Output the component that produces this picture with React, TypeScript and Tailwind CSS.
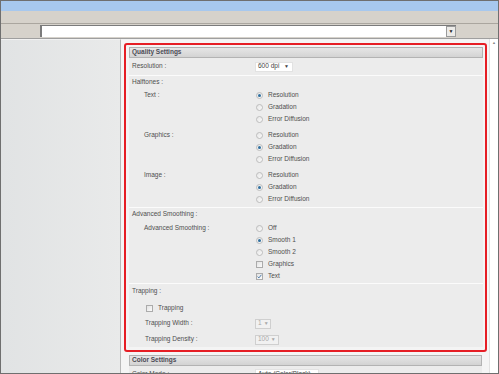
import React from 'react';

const font = { fontFamily: '"Liberation Sans", Arial, sans-serif' };

function Radio({ checked, label }: { checked?: boolean; label: string }) {
  return (
    <div className="flex items-center h-[12px]">
      <span className="ml-[1px] w-[7px] h-[7px] rounded-full border border-[#bdbdbd] bg-gradient-to-br from-[#e6e6e6] to-[#fafafa] flex items-center justify-center">
        {checked && <span className="w-[3px] h-[3px] rounded-full bg-[#2f6f9f]" />}
      </span>
      <span className="ml-[5px]">{label}</span>
    </div>
  );
}

function Checkbox({ checked, label }: { checked?: boolean; label: string }) {
  return (
    <div className="flex items-center h-[12px]">
      <span className="ml-[1px] w-[7px] h-[7px] border border-[#ababab] bg-gradient-to-br from-[#e2e2e2] to-[#fbfbfb] flex items-center justify-center">
        {checked && (
          <svg width="5" height="5" viewBox="0 0 5 5">
            <path d="M0.6 2.6 L1.9 3.9 L4.4 0.8" stroke="#3a6ea5" strokeWidth="0.9" fill="none" />
          </svg>
        )}
      </span>
      <span className="ml-[5px]">{label}</span>
    </div>
  );
}

function Select({ value, width, disabled }: { value: string; width: string; disabled?: boolean }) {
  return (
    <div
      className={`${width} h-[10px] flex items-center justify-between pl-[2px] pr-[3px] border whitespace-nowrap overflow-hidden ${
        disabled ? 'border-[#cfcfcf] bg-[#f1f1f1] text-[#a8a8a8]' : 'border-[#e2e2e2] bg-white text-[#444]'
      }`}
    >
      <span>{value}</span>
      <span className="text-[5px] ml-[2px]">▼</span>
    </div>
  );
}

function Header({ title }: { title: string }) {
  return (
    <div className="h-[11px] border border-[#b3b3b3] bg-gradient-to-b from-[#e6e6e6] to-[#d3d3d3] flex items-center pl-[2px] font-bold text-[#4b4b55]">
      {title}
    </div>
  );
}

function Sep() {
  return <div className="h-[1px] bg-[#fbfbfb]" />;
}

function RadioGroup({ label, items, sel }: { label: string; items: string[]; sel: number }) {
  return (
    <div className="flex">
      <div className="w-[126px] pl-[15px] h-[12px] flex items-center">{label}</div>
      <div>
        {items.map((it, i) => (
          <Radio key={it} label={it} checked={i === sel} />
        ))}
      </div>
    </div>
  );
}

export default function App() {
  const halftone = ['Resolution', 'Gradation', 'Error Diffusion'];
  return (
    <div
      className="w-[499px] h-[374px] border border-[#6f6f6f] flex flex-col overflow-hidden text-[6.5px] text-[#4e4e4e] leading-none bg-[#d6d2cb]"
      style={font}
    >
      <div className="h-[10px] bg-[#a7c8ee]" />
      <div className="h-[13px] bg-[#d6d2cb] border-b border-[#aaa69f]" />
      <div className="h-[15px] bg-[#d6d2cb] border-b border-[#9f9f9f] flex items-start pt-[1px]">
        <div className="ml-[39px] w-[416px] h-[12px] bg-white border-l-2 border-t border-[#7b7b7b] flex justify-end">
          <div className="w-[10px] h-[11px] border border-[#9a9a9a] bg-[#ecebe8] flex items-center justify-center text-[5px] text-[#222]">
            ▼
          </div>
        </div>
      </div>
      <div className="flex-1 flex min-h-0">
        <div className="w-[120px] bg-gradient-to-r from-[#e1e3e4] to-[#e9eaea] border-r border-[#b9b9b9] border-t border-t-[#f2f2f2]" />
        <div className="flex-1 bg-[#f5f5f5] pt-[3px] pl-[3px] pr-[2px] border-t border-[#f2f2f2]">
          <div className="border-2 border-[#e61e25] rounded-[3px] pt-[2px] pl-[3px] pr-[2px] pb-[2px] bg-[#f4f4f4]">
            <Header title="Quality Settings" />
            <div className="bg-[#ececec]">
              <div className="flex items-center h-[17px]">
                <div className="w-[126px] pl-[3px]">Resolution :</div>
                <Select value="600 dpi" width="w-[38px]" />
              </div>
              <Sep />
              <div className="h-[11px] flex items-center pl-[3px] mt-[1px]">Halftones :</div>
              <div className="flex flex-col gap-[4px] pt-[1px] pb-[2px]">
                <RadioGroup label="Text :" items={halftone} sel={0} />
                <RadioGroup label="Graphics :" items={halftone} sel={1} />
                <RadioGroup label="Image :" items={halftone} sel={1} />
              </div>
              <Sep />
              <div className="h-[11px] flex items-center pl-[3px] mt-[1px]">Advanced Smoothing :</div>
              <div className="flex pt-[2px] pb-[1px]">
                <div className="w-[126px] pl-[15px] h-[12px] flex items-center">Advanced Smoothing :</div>
                <div>
                  <Radio label="Off" />
                  <Radio label="Smooth 1" checked />
                  <Radio label="Smooth 2" />
                  <Checkbox label="Graphics" />
                  <Checkbox label="Text" checked />
                </div>
              </div>
              <Sep />
              <div className="h-[11px] flex items-center pl-[3px] mt-[2px]">Trapping :</div>
              <div className="pl-[16px] pt-[5px]">
                <Checkbox label="Trapping" />
              </div>
              <div className="flex items-center h-[15px] mt-[2px]">
                <div className="w-[126px] pl-[16px]">Trapping Width :</div>
                <Select value="1" width="w-[16px]" disabled />
              </div>
              <div className="flex items-center h-[15px] mt-[1px] mb-[1px]">
                <div className="w-[126px] pl-[16px]">Trapping Density :</div>
                <Select value="100" width="w-[24px]" disabled />
              </div>
            </div>
          </div>
          <div className="ml-[5px] mr-[5px] mt-[3px]">
            <Header title="Color Settings" />
            <div className="bg-[#ececec] flex items-center h-[16px]">
              <div className="w-[126px] pl-[3px]">Color Mode :</div>
              <Select value="Auto (Color/Black)" width="w-[64px]" />
            </div>
          </div>
        </div>
        <div className="w-[9px] bg-white border-l border-[#e2e2e2] flex justify-center pt-[2px]">
          <span className="text-[4px] text-[#888]">▲</span>
        </div>
      </div>
    </div>
  );
}
